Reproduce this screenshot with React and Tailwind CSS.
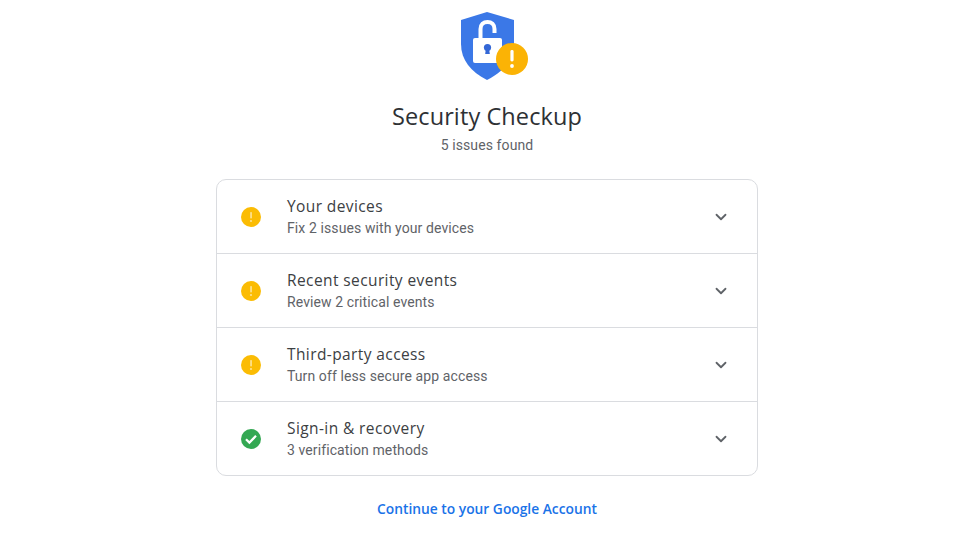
import React from 'react';
import { ChevronDown } from 'lucide-react';

const rows = [
  { title: 'Your devices', text: 'Fix 2 issues with your devices', status: 'warn' },
  { title: 'Recent security events', text: 'Review 2 critical events', status: 'warn' },
  { title: 'Third-party access', text: 'Turn off less secure app access', status: 'warn' },
  { title: 'Sign-in & recovery', text: '3 verification methods', status: 'ok' },
];

const ShieldLogo = () => (
  <svg width="72" height="72" viewBox="0 0 72 72" className="block">
    <path d="M27 0 L54 8 V32 C54 48 43 60 27 68 C11 60 1 48 1 32 V8 Z" fill="#3b78e7" />
    <path d="M20.5 27 V17 C20.5 12.5 23.5 10 27.5 10 C31.5 10 34.5 12.5 34.5 17 V21" fill="none" stroke="#fff" strokeWidth="4" />
    <rect x="13" y="26" width="29" height="25" rx="2" fill="#fff" />
    <circle cx="27.5" cy="35.5" r="3.6" fill="#3367d6" />
    <path d="M26 36 h3 l0.8 6 h-4.6 Z" fill="#3367d6" />
    <circle cx="52" cy="47" r="16" fill="#fbb305" />
    <rect x="50.4" y="38" width="3.2" height="11.5" rx="1.4" fill="#fff" />
    <circle cx="52" cy="54" r="1.9" fill="#fff" />
  </svg>
);

const StatusIcon = ({ status }) => {
  if (status === 'ok') {
    return (
      <svg width="20" height="20" viewBox="0 0 20 20">
        <circle cx="10" cy="10" r="10" fill="#34a853" />
        <path d="M5 10.2 L8.4 13.6 L15 6.8" fill="none" stroke="#fff" strokeWidth="2.2" />
      </svg>
    );
  }
  return (
    <svg width="20" height="20" viewBox="0 0 20 20">
      <circle cx="10" cy="10" r="10" fill="#fbbc04" />
      <rect x="9.2" y="5" width="1.7" height="6.5" rx="0.7" fill="#fde293" />
      <circle cx="10" cy="14" r="1.1" fill="#fde293" />
    </svg>
  );
};

export default function App() {
  return (
    <div className="h-[551px] w-[980px] overflow-hidden bg-white font-['Roboto',sans-serif] flex flex-col items-center pt-3">
      <div className="w-[542px] ml-[-6px] flex flex-col items-center">
        <div className="w-[72px] h-[72px] ml-[17px]">
          <ShieldLogo />
        </div>
        <h1 className="mt-[14px] text-[23.5px] leading-[36px] text-[#2e3134] font-['Open_Sans',sans-serif] tracking-[0.1px]">Security Checkup</h1>
        <p className="mt-[1px] text-[14px] leading-[20px] text-[#5f6368] tracking-[0.1px]">5 issues found</p>

        <div className="mt-[24px] w-full border border-[#dadce0] rounded-[10px]">
          {rows.map((row, i) => (
            <div key={row.title} className={`flex items-center pl-[24px] pr-[27px] ${i > 0 ? 'h-[74px] border-t border-[#dadce0]' : 'h-[73px]'}`}>
              <StatusIcon status={row.status} />
              <div className="ml-[26px] flex-1">
                <div className="text-[15.5px] leading-[21px] text-[#3c4043] font-['Open_Sans',sans-serif] tracking-[0.4px]">{row.title}</div>
                <div className="mt-[1px] text-[14px] leading-[20px] text-[#5f6368] tracking-[0.1px]">{row.text}</div>
              </div>
              <ChevronDown size={18} strokeWidth={2.4} className="text-[#5f6368]" />
            </div>
          ))}
        </div>

        <a className="mt-[23px] text-[13.8px] leading-[20px] font-semibold text-[#1a73e8] font-['Open_Sans',sans-serif]">Continue to your Google Account</a>
      </div>
    </div>
  );
}
